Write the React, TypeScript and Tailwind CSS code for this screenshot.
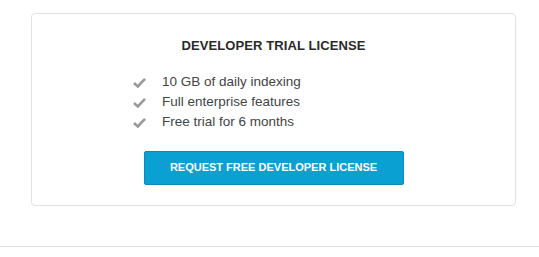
import React from 'react';

const Check: React.FC = () => (
  <svg width="13" height="11" viewBox="0 0 13 11" className="shrink-0">
    <path d="M1 6 L4.8 9.5 L12 1.8" fill="none" stroke="#9a9a9a" strokeWidth="2.6" strokeLinejoin="miter" />
  </svg>
);

const features = ['10 GB of daily indexing', 'Full enterprise features', 'Free trial for 6 months'];

const App: React.FC = () => {
  return (
    <div className="h-[257px] w-[539px] bg-white font-['Liberation_Sans',Arial,sans-serif]">
      <div className="px-[31px] pt-[13px]">
        <div className="flex h-[193px] w-[485px] flex-col items-center rounded-[4px] border border-[#e2e2e2] pt-[22px]">
          <h2 className="text-[13px] font-bold tracking-[0.1px] text-[#2a2a2a]">DEVELOPER TRIAL LICENSE</h2>
          <ul className="mt-[18px] flex w-full flex-col gap-[3px] pl-[101px]">
            {features.map((f) => (
              <li key={f} className="flex h-[17px] items-center gap-[16px] text-[13.5px] text-[#444]">
                <Check />
                <span>{f}</span>
              </li>
            ))}
          </ul>
          <button className="mt-[20px] flex h-[34px] w-[260px] items-center justify-center rounded-[2px] border border-[#0a8ab6] bg-[#0aa0d2] text-[11px] font-bold text-white">
            REQUEST FREE DEVELOPER LICENSE
          </button>
        </div>
      </div>
      <div className="mt-[40px] border-t border-[#dcdcdc]" />
    </div>
  );
};

export default App;
